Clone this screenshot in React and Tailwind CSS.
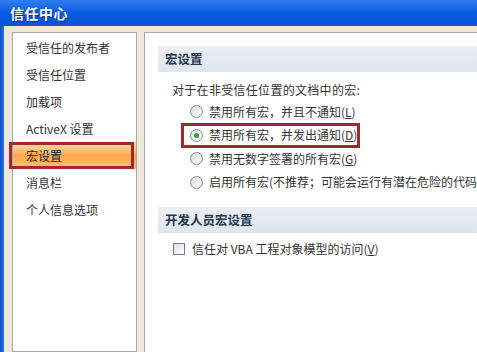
import React from "react";

const font = { fontFamily: '"Noto Sans CJK SC", "Liberation Sans", sans-serif' };

const navItems = [
  "受信任的发布者",
  "受信任位置",
  "加载项",
  "ActiveX 设置",
  "宏设置",
  "消息栏",
  "个人信息选项",
];

const Radio = ({ checked }) => (
  <span className="relative w-[13px] h-[13px] rounded-full border border-[#7f8c9a] bg-gradient-to-br from-[#dcdcdc] to-white flex items-center justify-center shrink-0">
    {checked && <span className="w-[5px] h-[5px] rounded-full bg-[#3a9a3a]" />}
  </span>
);

const RadioRow = ({ checked, label, hotkey, boxed }) => (
  <div className="relative h-[23.5px] flex items-center gap-[6px] pl-[18px] whitespace-nowrap">
    <Radio checked={checked} />
    <span className="text-[12px] text-[#333]">
      {label}(<span className="underline">{hotkey}</span>)
    </span>
    {boxed && (
      <div className="absolute left-[9px] top-[-0.5px] w-[179px] h-[25px] border-[3px] border-[#a3282b]" />
    )}
  </div>
);

const SectionHeader = ({ children }) => (
  <div className="h-[26px] bg-gradient-to-b from-[#ebeff4] to-[#dfe5ec] flex items-center pl-[7px] text-[12.5px] font-semibold text-[#26374f]">
    {children}
  </div>
);

export default function App() {
  return (
    <div className="w-[477px] h-[352px] overflow-hidden flex flex-col bg-[#ece9d8]" style={font}>
      {/* Title bar */}
      <div className="h-[26px] shrink-0 bg-gradient-to-b from-[#2f7cf0] via-[#0a5ae0] to-[#0752d6] flex items-center pl-[10px]">
        <span className="text-white text-[14px] font-bold tracking-[0.5px] [text-shadow:1px_1px_0_#0a2f80]">信任中心</span>
      </div>

      <div className="flex-1 flex">
        {/* window frame */}
        <div className="w-[4px] shrink-0 bg-gradient-to-r from-[#0a4fc8] to-[#2a6fe0]" />

        <div className="flex-1 min-w-0 flex pl-[8px] pt-[6px] gap-[7px]">
          {/* Left nav */}
          <div className="w-[125px] shrink-0 bg-white border border-[#a9a9a9] pt-[1px]">
            {navItems.map((item, i) =>
              i === 4 ? (
                <div key={item} className="relative h-[27px] flex items-center pl-[13px] bg-gradient-to-b from-[#fde4b0] via-[#fba64c] to-[#fcc47a]">
                  <span className="text-[12px] text-[#222]">{item}</span>
                  <div className="absolute left-[-4px] right-[2px] top-0 bottom-0 border-[3px] border-[#a3282b]" />
                </div>
              ) : (
                <div key={item} className="h-[27px] flex items-center pl-[13px] text-[12px] text-[#333]">
                  {item}
                </div>
              ),
            )}
          </div>

          {/* Right content */}
          <div className="flex-1 min-w-0 bg-white border-l border-t border-[#a9a9a9] pt-[13px] pl-[13px] overflow-hidden">
            <SectionHeader>宏设置</SectionHeader>
            <div className="pl-[14px] pt-[7px]">
              <div className="h-[21px] flex items-center text-[12px] text-[#333] tracking-[0.3px] whitespace-nowrap">
                对于在非受信任位置的文档中的宏:
              </div>
              <RadioRow label="禁用所有宏，并且不通知" hotkey="L" />
              <RadioRow checked label="禁用所有宏，并发出通知" hotkey="D" boxed />
              <RadioRow label="禁用无数字签署的所有宏" hotkey="G" />
              <RadioRow label="启用所有宏(不推荐；可能会运行有潜在危险的代码)" hotkey="E" />
            </div>
            <div className="mt-[13px]">
              <SectionHeader>开发人员宏设置</SectionHeader>
            </div>
            <div className="pl-[15px] pt-[8px] flex items-center gap-[7px] h-[24px] whitespace-nowrap">
              <span className="w-[12px] h-[12px] border border-[#6f7f8f] bg-gradient-to-br from-[#e0e0e0] to-white shrink-0" />
              <span className="text-[12px] text-[#333]">
                信任对 VBA 工程对象模型的访问(<span className="underline">V</span>)
              </span>
            </div>
          </div>
        </div>
      </div>
    </div>
  );
}
